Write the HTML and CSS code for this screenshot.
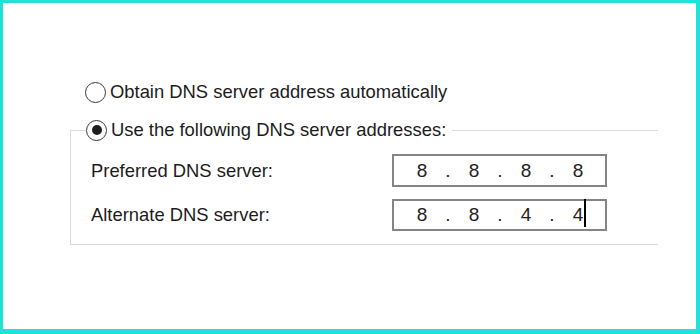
FILE: index.html
```html
<!DOCTYPE html>
<html>
<head>
<meta charset="utf-8">
<link rel="stylesheet" href="styles.css">
</head>
<body>
<div class="frame">
  <div class="panel">
    <label class="option first">
      <span class="radio"></span>
      <span class="text">Obtain DNS server address automatically</span>
    </label>
    <fieldset class="group">
      <legend class="legend">
        <span class="option">
          <span class="radio checked"></span>
          <span class="text">Use the following DNS server addresses:</span>
        </span>
      </legend>
      <div class="row">
        <span class="label">Preferred DNS server:</span>
        <div class="ipbox">
          <span class="oct">8</span><span class="dot">.</span><span class="oct">8</span><span class="dot">.</span><span class="oct">8</span><span class="dot">.</span><span class="oct">8</span>
        </div>
      </div>
      <div class="row second">
        <span class="label">Alternate DNS server:</span>
        <div class="ipbox">
          <span class="oct">8</span><span class="dot">.</span><span class="oct">8</span><span class="dot">.</span><span class="oct">4</span><span class="dot">.</span><span class="oct caret">4</span>
        </div>
      </div>
    </fieldset>
  </div>
</div>
</body>
</html>
```
FILE: styles.css
```css
html, body {
  margin: 0;
  padding: 0;
  background: #ffffff;
}
.frame {
  width: 700px;
  height: 334px;
  box-sizing: border-box;
  border-style: solid;
  border-color: #20e2d8;
  border-width: 3px 4px 5px 3px;
  background: #ffffff;
  font-family: "Liberation Sans", Arial, sans-serif;
  color: #1c1c1c;
  font-size: 18.4px;
}
.panel {
  padding-top: 77px;
  padding-left: 67px;
}
.option {
  display: flex;
  align-items: center;
  height: 24px;
}
.option.first {
  margin-left: 15px;
  margin-bottom: 14px;
}
.radio {
  width: 19px;
  height: 19px;
  border: 1.4px solid #3a3a3a;
  border-radius: 50%;
  box-sizing: content-box;
  margin-right: 4px;
  position: relative;
  flex: none;
}
.radio.checked::after {
  content: "";
  position: absolute;
  left: 4.5px;
  top: 4.5px;
  width: 10px;
  height: 10px;
  border-radius: 50%;
  background: #1e1e1e;
}
.text {
  white-space: nowrap;
  line-height: 24px;
}
.group {
  width: 588px;
  box-sizing: border-box;
  margin: 0;
  border: 1.5px solid #dadada;
  border-right: none;
  padding: 0 0 13px 15px;
}
.legend {
  padding: 0 6px 0 0;
}
.row {
  display: flex;
  align-items: center;
  margin-top: 12px;
  padding-left: 5px;
}
.label {
  width: 301px;
  white-space: nowrap;
}
.ipbox {
  width: 215px;
  height: 33px;
  box-sizing: border-box;
  border: 2px solid #858585;
  display: flex;
  align-items: center;
  padding-left: 13px;
  font-size: 19px;
  color: #222;
}
.row + .row .ipbox {
  height: 32px;
}
.oct {
  width: 30px;
  text-align: center;
  position: relative;
}
.dot {
  width: 22px;
  text-align: center;
}
.caret::after {
  content: "";
  position: absolute;
  left: 21px;
  top: -5px;
  width: 2px;
  height: 28px;
  background: #000;
}
```
